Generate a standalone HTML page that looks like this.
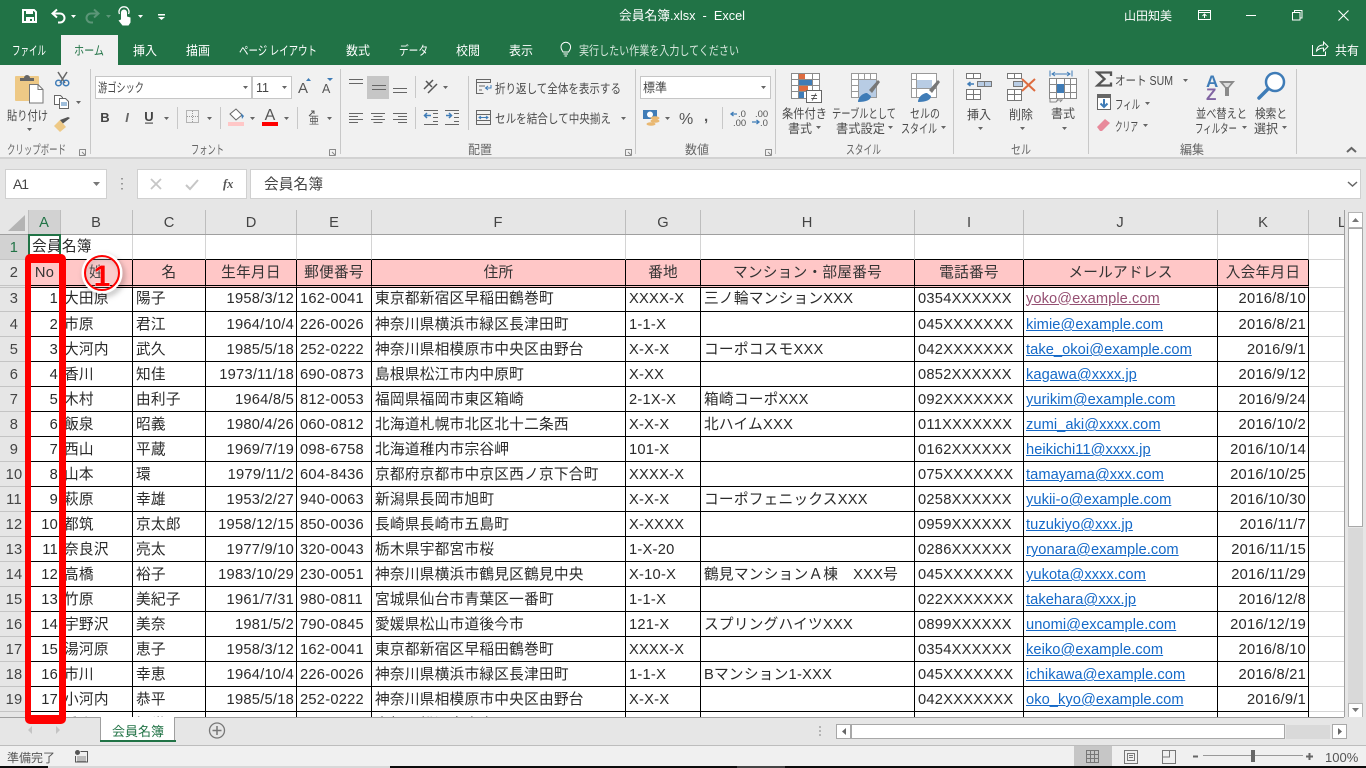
<!DOCTYPE html>
<html lang="ja"><head><meta charset="utf-8"><title>会員名簿.xlsx - Excel</title>
<style>
html,body{margin:0;padding:0;width:1366px;height:768px;overflow:hidden;background:#e6e6e6}
body{position:relative;font-family:"Liberation Sans","Noto Sans CJK JP",sans-serif}
svg{position:absolute;left:0;top:0;font-family:"Liberation Sans","Noto Sans CJK JP",sans-serif}
#g{position:absolute;left:0;top:235px;width:1344px;height:482px;overflow:hidden;background:#fff}
table{border-collapse:separate;border-spacing:0;table-layout:fixed;width:1384px;font-size:14.67px;letter-spacing:.25px;color:#2a2a2a;line-height:20px}
td,th{box-sizing:border-box;height:25px;padding:2px 0 0 3px;border-right:1px solid #d4d4d4;border-bottom:1px solid #d4d4d4;white-space:nowrap;overflow:hidden;font-weight:400;text-align:left}
th{background:#e6e6e6;text-align:center;padding:2px 0 0;border-right:1px solid #9f9f9f;border-bottom:1px solid #c4c4c4;color:#444}
tr.a td{border-bottom-color:#000}
tr.d td,tr.h td{border-color:#000}
tr.h{height:28px}tr.h td,tr.h th{height:28px;padding-top:0;padding-bottom:0}
tr.h td{background:#ffc7c7;text-align:center;padding-left:0;border-bottom:3px double #000;color:#333}
tr.h th{border-bottom:3px double #c4c4c4}
tr.f td,tr.f th{height:24px;padding-top:0;padding-bottom:2px}
tr.d td.l,tr.h td.l{border-color:#d4d4d4;background:#fff;border-bottom:1px solid #d4d4d4}
td.r{text-align:right;padding:2px 2px 0 0}
tr.f td.r{padding:0 2px 2px 0}
td a{color:#1469c8;text-decoration:underline;letter-spacing:.05px;margin-left:-1px}
td a.v{color:#954f72}
#a1{position:absolute;left:32px;top:237px;font-size:14.67px;letter-spacing:.25px;color:#2a2a2a;line-height:20px}
#sel{position:absolute;left:28px;top:234px;width:33px;height:27px;box-sizing:border-box;border:2px solid #217346}
#red{position:absolute;left:25px;top:254px;width:41px;height:470px;box-sizing:border-box;border:solid #f00;border-width:9px 7px 9px 6px;border-radius:5px 5px 5px 5px}
</style></head><body>
<svg width="1366" height="768" viewBox="0 0 1366 768">
<rect width="1366" height="65" fill="#217346"/>
<rect y="65" width="1366" height="93" fill="#f1f1f1"/>
<rect y="157" width="1366" height="2" fill="#d2d2d2"/>
<rect y="159" width="1366" height="51" fill="#e6e6e6"/>
<!-- title bar -->
<path d="M23 10h11l2 2v10H23z" fill="none" stroke="#fff" stroke-width="2"/><rect x="26" y="10" width="7" height="4" fill="#fff"/><path d="M26 23v-6h8v6h-2v-4h-2v4z" fill="#fff"/>
<path d="M53 13.5h7a4.5 4.5 0 0 1 0 9h-2" fill="none" stroke="#fff" stroke-width="2"/><path d="M57 9.5l-4.5 4 4.5 4" fill="none" stroke="#fff" stroke-width="2"/><path d="M71 15h5l-2.5 3z" fill="#fff"/>
<path d="M98 13.5h-7a4.5 4.5 0 0 0 0 9h2" fill="none" stroke="#5c9678" stroke-width="2"/><path d="M94 9.5l4.5 4-4.5 4" fill="none" stroke="#5c9678" stroke-width="2"/><path d="M106 15h5l-2.5 3z" fill="#5c9678"/>
<path d="M121 12.5a3 3 0 0 1 6 0v4l3.500 1v5l-2 3h-6l-4-5 2.500-1v-7z" fill="#fff"/><path d="M119.500 14a5 5 0 1 1 9 0" fill="none" stroke="#fff" stroke-width="1.300"/><path d="M138 15h5l-2.500 3z" fill="#fff"/>
<rect x="158" y="14" width="7" height="1.500" fill="#fff"/><path d="M158 17h7l-3.500 3z" fill="#fff"/>
<g fill="#fff" font-size="13"><text x="619" y="20" textLength="126" lengthAdjust="spacingAndGlyphs" xml:space="preserve">会員名簿.xlsx  -  Excel</text><text x="1124" y="20" font-size="12" textLength="48" lengthAdjust="spacingAndGlyphs">山田知美</text></g>
<rect x="1198.500" y="10.500" width="12" height="9" fill="none" stroke="#fff"/><path d="M1198 12.500h13M1204.500 18v-4M1202.500 16l2-2 2 2" fill="none" stroke="#fff"/>
<rect x="1246" y="15" width="10" height="1" fill="#fff"/>
<path d="M1292.500 12.500h7.500v7.500h-7.500zM1294.500 12.500v-2h7.500v7.500h-2" fill="none" stroke="#fff"/>
<path d="M1338.500 10.500l10 10M1348.500 10.500l-10 10" fill="none" stroke="#fff" stroke-width="1.100"/>
<!-- tabs -->
<rect x="61" y="35" width="57" height="30" fill="#f1f1f1"/>
<g fill="#fff" font-size="12.500">
<text x="12" y="55" textLength="34" lengthAdjust="spacingAndGlyphs">ファイル</text>
<text x="74" y="55" textLength="30" lengthAdjust="spacingAndGlyphs" fill="#217346">ホーム</text>
<text x="133" y="55" textLength="24" lengthAdjust="spacingAndGlyphs">挿入</text>
<text x="186" y="55" textLength="24" lengthAdjust="spacingAndGlyphs">描画</text>
<text x="239" y="55" textLength="78" lengthAdjust="spacingAndGlyphs" xml:space="preserve">ページ レイアウト</text>
<text x="346" y="55" textLength="24" lengthAdjust="spacingAndGlyphs">数式</text>
<text x="399" y="55" textLength="29" lengthAdjust="spacingAndGlyphs">データ</text>
<text x="456" y="55" textLength="24" lengthAdjust="spacingAndGlyphs">校閲</text>
<text x="509" y="55" textLength="24" lengthAdjust="spacingAndGlyphs">表示</text>
<text x="579" y="55" textLength="160" lengthAdjust="spacingAndGlyphs" fill="#d6e6dc">実行したい作業を入力してください</text>
<text x="1335" y="55" textLength="24" lengthAdjust="spacingAndGlyphs">共有</text>
</g>
<path d="M563 52c-1-2-2-2.500-2-5a4.800 4.800 0 0 1 9.600 0c0 2.500-1 3-2 5zM563.500 54h4.500M564.500 56h2.500" fill="none" stroke="#fff"/>
<path d="M1312.500 45v10.500h13v-4M1316.500 51c.5-4 3-6 7-6v-3l4.500 4.500-4.500 4.500v-3c-3 0-5 1-7 3z" fill="none" stroke="#fff"/>
<!-- separators -->
<g fill="#c8c8c8"><rect x="90" y="69" width="1" height="85"/><rect x="340" y="69" width="1" height="85"/><rect x="635" y="69" width="1" height="85"/><rect x="775" y="69" width="1" height="85"/><rect x="953" y="69" width="1" height="85"/><rect x="1088" y="69" width="1" height="85"/><rect x="1296" y="69" width="1" height="85"/>
<rect x="177" y="107" width="1" height="22"/><rect x="220" y="107" width="1" height="22"/><rect x="297" y="107" width="1" height="22"/><rect x="415" y="76" width="1" height="22"/><rect x="415" y="107" width="1" height="22"/><rect x="468" y="76" width="1" height="54"/><rect x="722" y="107" width="1" height="22"/></g>
<!-- clipboard -->
<rect x="15" y="76" width="24" height="25" rx="1" fill="#eec986"/><path d="M20 78h4a3 3 0 0 1 6 0h4v3H20z" fill="#666"/>
<path d="M29.500 84.500h8.500l5 5v13.500H29.500z" fill="#fff" stroke="#777"/><path d="M38 84.500v5h5" fill="none" stroke="#777"/>
<path d="M58 72l7 11M67 72l-7 11" stroke="#666" stroke-width="1.500" fill="none"/><circle cx="58.500" cy="83" r="2.800" fill="none" stroke="#3f7cb7" stroke-width="1.500"/><circle cx="66" cy="83" r="2.800" fill="none" stroke="#3f7cb7" stroke-width="1.500"/>
<path d="M54.500 95.500h6l2 2v7h-8z" fill="#fff" stroke="#666"/><path d="M59.500 98.500h6l3 3v7h-9z" fill="#fff" stroke="#666"/><path d="M61 103h6M61 105h6" stroke="#3f7cb7"/><path d="M76 101h5l-2.500 3z" fill="#666"/>
<path d="M54 126l6-6 6 7-6 5z" fill="#eec986"/><path d="M60 120l3 3.500 7-5.500-2-1z" fill="#555"/>
<g fill="#4a4a4a" font-size="12.500">
<text x="7" y="120" textLength="41" lengthAdjust="spacingAndGlyphs">貼り付け</text>
<text x="7" y="154" textLength="59" lengthAdjust="spacingAndGlyphs" fill="#666">クリップボード</text>
<text x="191" y="154" textLength="33" lengthAdjust="spacingAndGlyphs" fill="#666">フォント</text>
<text x="468" y="154" textLength="24" lengthAdjust="spacingAndGlyphs" fill="#666">配置</text>
<text x="685" y="154" textLength="24" lengthAdjust="spacingAndGlyphs" fill="#666">数値</text>
<text x="846" y="154" textLength="35" lengthAdjust="spacingAndGlyphs" fill="#666">スタイル</text>
<text x="1011" y="154" textLength="20" lengthAdjust="spacingAndGlyphs" fill="#666">セル</text>
<text x="1180" y="154" textLength="24" lengthAdjust="spacingAndGlyphs" fill="#666">編集</text>
<text x="495" y="93" textLength="126" lengthAdjust="spacingAndGlyphs">折り返して全体を表示する</text>
<text x="495" y="123" textLength="116" lengthAdjust="spacingAndGlyphs">セルを結合して中央揃え</text>
<text x="782" y="118" textLength="45" lengthAdjust="spacingAndGlyphs">条件付き</text>
<text x="788" y="133" textLength="24" lengthAdjust="spacingAndGlyphs">書式</text>
<text x="832" y="118" textLength="64" lengthAdjust="spacingAndGlyphs">テーブルとして</text>
<text x="836" y="133" textLength="49" lengthAdjust="spacingAndGlyphs">書式設定</text>
<text x="910" y="118" textLength="30" lengthAdjust="spacingAndGlyphs">セルの</text>
<text x="901" y="133" textLength="36" lengthAdjust="spacingAndGlyphs">スタイル</text>
<text x="967" y="119" textLength="24" lengthAdjust="spacingAndGlyphs">挿入</text>
<text x="1009" y="119" textLength="24" lengthAdjust="spacingAndGlyphs">削除</text>
<text x="1051" y="118" textLength="24" lengthAdjust="spacingAndGlyphs">書式</text>
<text x="1115" y="85" textLength="58" lengthAdjust="spacingAndGlyphs" xml:space="preserve">オート SUM</text>
<text x="1115" y="109" textLength="25" lengthAdjust="spacingAndGlyphs">フィル</text>
<text x="1115" y="131" textLength="23" lengthAdjust="spacingAndGlyphs">クリア</text>
<text x="1196" y="118" textLength="51" lengthAdjust="spacingAndGlyphs">並べ替えと</text>
<text x="1195" y="133" textLength="42" lengthAdjust="spacingAndGlyphs">フィルター</text>
<text x="1255" y="118" textLength="32" lengthAdjust="spacingAndGlyphs">検索と</text>
<text x="1254" y="133" textLength="24" lengthAdjust="spacingAndGlyphs">選択</text>
</g>
<!-- font group -->
<g fill="#fff" stroke="#c6c6c6"><rect x="95.500" y="76.500" width="156" height="22"/><rect x="252.500" y="76.500" width="39" height="22"/><rect x="640.500" y="76.500" width="130" height="22"/></g>
<g fill="#444"><text x="98" y="92" font-size="12.500" textLength="46" lengthAdjust="spacingAndGlyphs">游ゴシック</text><text x="256" y="92" font-size="12.500">11</text><text x="643" y="92" font-size="12.500" textLength="24" lengthAdjust="spacingAndGlyphs">標準</text>
<text x="298" y="93" font-size="15" fill="#555">A</text><text x="322" y="93" font-size="12.500" fill="#555">A</text>
<text x="105" y="122" font-size="13" font-weight="700" text-anchor="middle">B</text><text x="127" y="122" font-size="13" font-weight="700" font-style="italic" text-anchor="middle" fill="#666">I</text><text x="149" y="121" font-size="13" font-weight="700" text-anchor="middle">U</text>
<text x="270" y="120" font-size="16" font-weight="400" text-anchor="middle" fill="#555">A</text>
<text x="679" y="124" font-size="16" fill="#555">%</text><text x="704" y="121" font-size="15" font-weight="700" fill="#555">,</text>
<text x="309" y="124" font-size="10" fill="#555">亜</text></g>
<path d="M243 86h5l-2.500 3zM282 86h5l-2.500 3zM761 86h5l-2.500 3z" fill="#666"/>
<path d="M306 81l2.500-3 2.500 3zM327 78h6l-3 3z" fill="#3f7cb7"/>
<rect x="145" y="122.500" width="8" height="1.200" fill="#555"/>
<path d="M164 117h5l-2.500 3zM207 117h5l-2.500 3zM250 117h5l-2.500 3zM284 117h5l-2.500 3zM327 117h5l-2.500 3zM621 117h5l-2.500 3zM665 117h5l-2.500 3zM443 86h5l-2.500 3zM27 128h5l-2.500 3zM816 126h5l-2.500 3zM888 126h5l-2.500 3zM941 126h5l-2.500 3zM978 127h5l-2.500 3zM1020 127h5l-2.500 3zM1062 127h5l-2.500 3zM1183 79h5l-2.500 3zM1145 102h5l-2.500 3zM1143 124h5l-2.500 3zM1242 126h5l-2.500 3zM1282 126h5l-2.500 3z" fill="#666"/>
<rect x="186.500" y="110.500" width="12" height="12" fill="none" stroke="#777" stroke-dasharray="1 1"/><path d="M192.500 111v12M187 116.500h12" stroke="#999" stroke-dasharray="1 1"/>
<path d="M230 114l6-5 6 6-6 5z" fill="#fff" stroke="#666"/><path d="M241 113l3 3-2 3z" fill="#3f7cb7"/><rect x="228" y="122" width="16" height="4" fill="#ffc7c7"/>
<rect x="262" y="122" width="16" height="4" fill="#f00"/>
<path d="M309 116l5-5M311 111h3v3" fill="none" stroke="#555"/>
<!-- alignment -->
<rect x="367" y="76" width="22" height="23" fill="#c6c6c6"/>
<path d="M349 79.500h14M349 83.500h14M372 85.500h14M372 89.500h14M393 88.500h14M393 92.500h14M349 113.500h14M349 116.500h9M349 119.500h14M349 122.500h9M371 113.500h14M373.500 116.500h9M371 119.500h14M373.500 122.500h9M393 113.500h14M398 116.500h9M393 119.500h14M398 122.500h9" stroke="#666" fill="none"/>
<path d="M424 89l9-9M428 93l9-9M426 81l6 6" stroke="#555" fill="none" stroke-width="1.500"/>
<path d="M433 113.500h5M433 117.500h5M433 121.500h5M424 124.500h14M424 110.500h14" stroke="#666" fill="none"/><path d="M431 115.500h-6M427 113l-2.500 2.500 2.500 2.500" stroke="#3f7cb7" fill="none" stroke-width="1.500"/>
<path d="M454 113.500h5M454 117.500h5M454 121.500h5M445 124.500h14M445 110.500h14" stroke="#666" fill="none"/><path d="M446 115.500h6M449 113l2.500 2.500-2.500 2.500" stroke="#3f7cb7" fill="none" stroke-width="1.500"/>
<path d="M476.500 79.500h14v3h-14zM476.500 82.500v11h7M479 86h6M479 90h3" fill="none" stroke="#666"/><path d="M491 85v3h-5M488 86l-2.500 2 2.500 2" fill="none" stroke="#3f7cb7"/>
<path d="M476.500 110.500h14v14h-14zM476.500 114.500h14M476.500 120.500h14" fill="none" stroke="#666"/><path d="M479 117.500h9M481 116l-2 1.500 2 1.500M486 116l2 1.500-2 1.500" fill="none" stroke="#3f7cb7"/>
<!-- launchers -->
<path d="M79.500 149.500h6v6M79.500 149.500v6h6M82 152l3 3" fill="none" stroke="#8a8a8a"/>
<path d="M329.500 149.500h6v6M329.500 149.500v6h6M332 152l3 3" fill="none" stroke="#8a8a8a"/>
<path d="M625.500 149.500h6v6M625.500 149.500v6h6M628 152l3 3" fill="none" stroke="#8a8a8a"/>
<path d="M765.500 149.500h6v6M765.500 149.500v6h6M768 152l3 3" fill="none" stroke="#8a8a8a"/>
<!-- number -->
<rect x="643" y="110" width="14" height="9" fill="#3f7cb7"/><circle cx="650" cy="114.500" r="3" fill="#fff"/>
<g fill="#e9b872"><ellipse cx="655" cy="118" rx="4.500" ry="1.800"/><ellipse cx="655" cy="121" rx="4.500" ry="1.800"/><ellipse cx="651" cy="124" rx="4.500" ry="1.800"/></g>
<g fill="#555" font-size="9.500"><text x="738" y="117">.0</text><text x="733" y="126">.00</text><text x="755" y="117">.00</text><text x="760" y="126">.0</text></g>
<path d="M737 114h-6M733.500 112l-2.500 2 2.500 2" fill="none" stroke="#3f7cb7" stroke-width="1.300"/><path d="M752 122h7M756.500 120l2.500 2-2.500 2" fill="none" stroke="#3f7cb7" stroke-width="1.300"/>
<!-- cond format -->
<path d="M791.500 73.500h28v25h-28zM798.500 73.500v25M812.500 73.500v25M791.500 79.500h28M791.500 85.500h28M791.500 91.500h28" fill="#fff" stroke="#8a8a8a"/>
<rect x="799" y="74" width="6" height="5" fill="#de6b3f"/><rect x="799" y="80" width="13" height="5" fill="#3f7cb7"/><rect x="799" y="86" width="9" height="5" fill="#de6b3f"/><rect x="799" y="92" width="5" height="6" fill="#3f7cb7"/>
<rect x="806.500" y="90.500" width="15" height="12" fill="#fff" stroke="#666"/><text x="814" y="101" font-size="12" text-anchor="middle" fill="#444">≠</text>
<!-- table fmt -->
<path d="M851.500 73.500h25v24h-25zM851.500 79.500h25M851.500 85.500h25M851.500 91.500h25M858.500 73.500v24M864.500 73.500v24M870.500 73.500v24" fill="#fff" stroke="#999"/>
<rect x="859" y="80" width="17" height="17" fill="#b8cce4"/><path d="M880 82l-2-2-9 10 3 3z" fill="#777"/><path d="M858 102c0-5 5-9 9-9l4 3c0 4-5 6-13 6z" fill="#3f7cb7"/>
<!-- cell style -->
<path d="M911.500 73.500h25v24h-25z" fill="#fff" stroke="#999"/><path d="M911.500 79.500h5M916.500 73.500v24M911.500 88.500h25" fill="none" stroke="#999"/>
<rect x="917" y="80" width="15" height="8" fill="#b8cce4"/><path d="M940 82l-2-2-9 10 3 3z" fill="#777"/><path d="M918 102c0-5 5-9 9-9l4 3c0 4-5 6-13 6z" fill="#3f7cb7"/>
<!-- insert -->
<path d="M966.500 73.500h14v5h-14zM973.500 73.500v5M966.500 89.500h14v10h-14zM966.500 94.500h14M973.500 89.500v10" fill="#fff" stroke="#777"/>
<path d="M977.500 81.500h14v5h-14zM984.500 81.500v5" fill="#b8cce4" stroke="#777"/><path d="M974 84h-6M970.500 82l-2.500 2 2.500 2" fill="none" stroke="#3f7cb7" stroke-width="1.500"/>
<!-- delete -->
<path d="M1007.500 73.500h14v5h-14zM1014.500 73.500v5M1007.500 89.500h14v11h-14zM1007.500 94.500h14M1014.500 89.500v11" fill="#fff" stroke="#777"/>
<rect x="1013.500" y="81.500" width="9" height="5" fill="#b8cce4" stroke="#777"/><path d="M1022 79l13 12M1035 79l-13 12" stroke="#de6b3f" stroke-width="2" fill="none"/>
<!-- format -->
<path d="M1050 70.500v6M1072 70.500v6M1052 74h18M1055 72l-3 2 3 2M1067 72l3 2-3 2" fill="none" stroke="#3f7cb7"/>
<path d="M1049.500 78.500h27v20h-27zM1049.500 84.500h27M1049.500 92.500h27M1056.500 78.500v20M1064.500 78.500v20M1070.500 78.500v20" fill="#fff" stroke="#888"/><rect x="1057" y="84" width="7" height="9" fill="#3f7cb7"/>
<path d="M1050 99v3h6l2-2h4l-2 2M1056 102l2-3" fill="none" stroke="#888"/>
<!-- edit -->
<path d="M1111 76v-3.500h-13.500l7 6.500-7 6.500h13.500v-3" fill="none" stroke="#555" stroke-width="2.300"/>
<rect x="1097.500" y="94.500" width="13" height="15" fill="#fff" stroke="#666"/><rect x="1097" y="94" width="14" height="4" fill="#666"/><path d="M1104 99v8M1100.500 103.500l3.500 3.500 3.500-3.500" fill="none" stroke="#3f7cb7" stroke-width="2"/>
<path d="M1097 127l8-8 5 4-8 8h-2z" fill="#e88a9b"/>
<g font-weight="700" font-size="17"><text x="1206" y="87" fill="#3f7cb7">A</text><text x="1206" y="100" fill="#8064a2">Z</text></g>
<path d="M1219 81h16l-6 7v8h-4v-8z" fill="#8a8a8a"/><path d="M1223 83h8l-3 4h-2z" fill="#ddd"/>
<circle cx="1275" cy="82" r="9" fill="#fff" stroke="#3f7cb7" stroke-width="2.500"/><path d="M1268 89l-9 9" stroke="#3f7cb7" stroke-width="3.500" stroke-linecap="round"/>
<path d="M1347 152l4.500-4 4.500 4" fill="none" stroke="#666" stroke-width="2"/>
<!-- formula bar -->
<g fill="#fff" stroke="#d0d0d0"><rect x="5.500" y="169.500" width="101" height="29"/><rect x="137.500" y="169.500" width="109" height="29"/><rect x="250.500" y="169.500" width="1110" height="29"/></g>
<text x="13" y="189" font-size="14" fill="#444" textLength="16" lengthAdjust="spacing">A1</text><path d="M93 182h7l-3.500 4z" fill="#777"/>
<path d="M122 178v1.500M122 183v1.500M122 188v1.500" stroke="#999" stroke-width="2"/>
<path d="M151 179l10 10M161 179l-10 10" stroke="#c6c6c6" stroke-width="1.800" fill="none"/><path d="M186 185l4 4 8-9" stroke="#c6c6c6" stroke-width="2" fill="none"/>
<text x="223" y="188" font-family="Liberation Serif,serif" font-style="italic" font-weight="700" font-size="12.500" fill="#555">fx</text>
<text x="264" y="189" font-size="14.670" textLength="59" fill="#444">会員名簿</text>
<path d="M1348 182l4.500 4 4.500-4" fill="none" stroke="#666" stroke-width="1.500"/>
<!-- col headers -->
<rect y="210" width="1344" height="25" fill="#e6e6e6"/><rect x="28" y="210" width="32" height="24" fill="#d2d2d2"/>
<path d="M8 231h17v-16z" fill="#b4b4b4"/>
<path d="M28.500 210v24M60.500 210v24M132.500 210v24M205.500 210v24M296.500 210v24M371.500 210v24M625.500 210v24M700.500 210v24M914.500 210v24M1023.500 210v24M1217.500 210v24M1308.500 210v24" stroke="#bdbdbd" fill="none"/>
<rect y="234" width="1344" height="1" fill="#9f9f9f"/>
<g font-size="14.670" fill="#444" text-anchor="middle"><text x="44" y="227" fill="#217346">A</text><text x="96" y="227">B</text><text x="169" y="227">C</text><text x="251" y="227">D</text><text x="334" y="227">E</text><text x="498" y="227">F</text><text x="663" y="227">G</text><text x="807" y="227">H</text><text x="969" y="227">I</text><text x="1120" y="227">J</text><text x="1263" y="227">K</text><text x="1342" y="227">L</text></g>
<rect x="1344" y="210" width="22" height="507" fill="#e6e6e6"/>
<rect x="1344" y="210" width="1" height="507" fill="#9f9f9f"/>
<rect x="1348.500" y="212.500" width="14" height="15" fill="#fff" stroke="#b4b4b4"/><path d="M1352 222l3.500-4 3.500 4z" fill="#777"/>
<rect x="1348.500" y="228.500" width="14" height="298" fill="#fff" stroke="#a8a8a8"/>
<rect x="1348" y="528" width="15" height="175" fill="#d9d9d9"/>
<rect x="1348.500" y="703.500" width="14" height="14" fill="#fff" stroke="#b4b4b4"/><path d="M1352 708l3.500 4 3.500-4z" fill="#777"/>
<!-- tabs row -->
<rect y="717" width="1366" height="28" fill="#e6e6e6"/><rect y="717" width="1344" height="1" fill="#9f9f9f"/>
<path d="M100.500 717v24h74v-24" fill="#fff" stroke="#9f9f9f"/><rect x="100" y="740" width="76" height="2" fill="#217346"/>
<text x="112" y="736" font-size="13" fill="#217346" textLength="52" lengthAdjust="spacingAndGlyphs">会員名簿</text>
<path d="M32 726l-4 4 4 4zM56 726l4 4-4 4z" fill="#c4c4c4"/>
<circle cx="217" cy="730.500" r="7.500" fill="none" stroke="#777" stroke-width="1.300"/><path d="M212.500 730.500h9M217 726v9" stroke="#777" stroke-width="1.500"/>
<path d="M820 726v2M820 730v2M820 734v2" stroke="#b4b4b4" stroke-width="2"/>
<rect x="836.500" y="724.500" width="14" height="14" fill="#fff" stroke="#a8a8a8"/><path d="M846 728l-4 3.500 4 3.500z" fill="#666"/>
<rect x="851.500" y="724.500" width="433" height="14" fill="#fff" stroke="#a8a8a8"/><rect x="1286" y="725" width="44" height="14" fill="#d9d9d9"/>
<rect x="1332.500" y="724.500" width="14" height="14" fill="#fff" stroke="#a8a8a8"/><path d="M1338 728l4 3.500-4 3.500z" fill="#666"/>
<!-- status bar -->
<rect y="745" width="1366" height="21" fill="#f0f0f0"/><rect y="745" width="1366" height="1" fill="#bdbdbd"/>
<text x="7" y="762" font-size="12" fill="#555" textLength="48" lengthAdjust="spacingAndGlyphs">準備完了</text>
<rect x="75" y="750" width="5" height="5" rx="2.500" fill="#555"/><path d="M80.500 751.500h7v10.500h-12v-6" fill="none" stroke="#555"/><path d="M77 757h9M77 759h9M77 761h9" stroke="#888"/>
<rect x="1074" y="746" width="38" height="20" fill="#c6c6c6"/>
<path d="M1086.500 750.500h12v12h-12zM1086.500 754.500h12M1086.500 758.500h12M1090.500 750.500v12M1094.500 750.500v12" fill="none" stroke="#777"/>
<path d="M1124.500 750.500h13v13h-13zM1127.500 753.500h7v7h-7zM1129 755.500h4M1129 757.500h4" fill="none" stroke="#777"/>
<path d="M1162.500 750.500h13v13h-13zM1169.500 750.500v6.500h-7" fill="none" stroke="#777"/>
<path d="M1193 756.500h5" stroke="#666" stroke-width="2"/><rect x="1203" y="755" width="100" height="1" fill="#999"/><rect x="1251" y="750" width="4" height="12" fill="#666"/><path d="M1306 756.500h7M1309.500 753v7" stroke="#666" stroke-width="2"/>
<text x="1325" y="762" font-size="13" fill="#555">100%</text>
<rect y="766" width="1366" height="2" fill="#0c0c0c"/><rect x="48" y="766" width="342" height="2" fill="#d8d8d8"/><rect x="737" y="766" width="48" height="2" fill="#444"/>
</svg>
<div id="g"><table>
<colgroup><col style="width:29px"><col style="width:32px"><col style="width:72px"><col style="width:73px"><col style="width:91px"><col style="width:75px"><col style="width:254px"><col style="width:75px"><col style="width:214px"><col style="width:109px"><col style="width:194px"><col style="width:91px"><col style="width:75px"></colgroup>
<tr class="a"><th style="background:#d2d2d2;color:#217346">1</th><td></td><td></td><td></td><td></td><td></td><td></td><td></td><td></td><td></td><td></td><td></td><td style="border-bottom-color:#d4d4d4"></td></tr>
<tr class="h"><th>2</th><td>No</td><td>姓</td><td>名</td><td>生年月日</td><td>郵便番号</td><td>住所</td><td>番地</td><td>マンション・部屋番号</td><td>電話番号</td><td>メールアドレス</td><td>入会年月日</td><td class="l"></td></tr>
<tr class="d f"><th>3</th><td class="r">1</td><td>大田原</td><td>陽子</td><td class="r">1958/3/12</td><td>162-0041</td><td>東京都新宿区早稲田鶴巻町</td><td>XXXX-X</td><td>三ノ輪マンションXXX</td><td>0354XXXXXX</td><td><a class="v">yoko@example.com</a></td><td class="r">2016/8/10</td><td class="l"></td></tr>
<tr class="d"><th>4</th><td class="r">2</td><td>市原</td><td>君江</td><td class="r">1964/10/4</td><td>226-0026</td><td>神奈川県横浜市緑区長津田町</td><td>1-1-X</td><td></td><td>045XXXXXXX</td><td><a>kimie@example.com</a></td><td class="r">2016/8/21</td><td class="l"></td></tr>
<tr class="d"><th>5</th><td class="r">3</td><td>大河内</td><td>武久</td><td class="r">1985/5/18</td><td>252-0222</td><td>神奈川県相模原市中央区由野台</td><td>X-X-X</td><td>コーポコスモXXX</td><td>042XXXXXXX</td><td><a>take_okoi@example.com</a></td><td class="r">2016/9/1</td><td class="l"></td></tr>
<tr class="d"><th>6</th><td class="r">4</td><td>香川</td><td>知佳</td><td class="r">1973/11/18</td><td>690-0873</td><td>島根県松江市内中原町</td><td>X-XX</td><td></td><td>0852XXXXXX</td><td><a>kagawa@xxxx.jp</a></td><td class="r">2016/9/12</td><td class="l"></td></tr>
<tr class="d"><th>7</th><td class="r">5</td><td>木村</td><td>由利子</td><td class="r">1964/8/5</td><td>812-0053</td><td>福岡県福岡市東区箱崎</td><td>2-1X-X</td><td>箱崎コーポXXX</td><td>092XXXXXXX</td><td><a>yurikim@example.com</a></td><td class="r">2016/9/24</td><td class="l"></td></tr>
<tr class="d"><th>8</th><td class="r">6</td><td>飯泉</td><td>昭義</td><td class="r">1980/4/26</td><td>060-0812</td><td>北海道札幌市北区北十二条西</td><td>X-X-X</td><td>北ハイムXXX</td><td>011XXXXXXX</td><td><a>zumi_aki@xxxx.com</a></td><td class="r">2016/10/2</td><td class="l"></td></tr>
<tr class="d"><th>9</th><td class="r">7</td><td>西山</td><td>平蔵</td><td class="r">1969/7/19</td><td>098-6758</td><td>北海道稚内市宗谷岬</td><td>101-X</td><td></td><td>0162XXXXXX</td><td><a>heikichi11@xxxx.jp</a></td><td class="r">2016/10/14</td><td class="l"></td></tr>
<tr class="d"><th>10</th><td class="r">8</td><td>山本</td><td>環</td><td class="r">1979/11/2</td><td>604-8436</td><td>京都府京都市中京区西ノ京下合町</td><td>XXXX-X</td><td></td><td>075XXXXXXX</td><td><a>tamayama@xxx.com</a></td><td class="r">2016/10/25</td><td class="l"></td></tr>
<tr class="d"><th>11</th><td class="r">9</td><td>萩原</td><td>幸雄</td><td class="r">1953/2/27</td><td>940-0063</td><td>新潟県長岡市旭町</td><td>X-X-X</td><td>コーポフェニックスXXX</td><td>0258XXXXXX</td><td><a>yukii-o@example.com</a></td><td class="r">2016/10/30</td><td class="l"></td></tr>
<tr class="d"><th>12</th><td class="r">10</td><td>都筑</td><td>京太郎</td><td class="r">1958/12/15</td><td>850-0036</td><td>長崎県長崎市五島町</td><td>X-XXXX</td><td></td><td>0959XXXXXX</td><td><a>tuzukiyo@xxx.jp</a></td><td class="r">2016/11/7</td><td class="l"></td></tr>
<tr class="d"><th>13</th><td class="r">11</td><td>奈良沢</td><td>亮太</td><td class="r">1977/9/10</td><td>320-0043</td><td>栃木県宇都宮市桜</td><td>1-X-20</td><td></td><td>0286XXXXXX</td><td><a>ryonara@example.com</a></td><td class="r">2016/11/15</td><td class="l"></td></tr>
<tr class="d"><th>14</th><td class="r">12</td><td>高橋</td><td>裕子</td><td class="r">1983/10/29</td><td>230-0051</td><td>神奈川県横浜市鶴見区鶴見中央</td><td>X-10-X</td><td>鶴見マンションＡ棟　XXX号</td><td>045XXXXXXX</td><td><a>yukota@xxxx.com</a></td><td class="r">2016/11/29</td><td class="l"></td></tr>
<tr class="d"><th>15</th><td class="r">13</td><td>竹原</td><td>美紀子</td><td class="r">1961/7/31</td><td>980-0811</td><td>宮城県仙台市青葉区一番町</td><td>1-1-X</td><td></td><td>022XXXXXXX</td><td><a>takehara@xxx.jp</a></td><td class="r">2016/12/8</td><td class="l"></td></tr>
<tr class="d"><th>16</th><td class="r">14</td><td>宇野沢</td><td>美奈</td><td class="r">1981/5/2</td><td>790-0845</td><td>愛媛県松山市道後今市</td><td>121-X</td><td>スプリングハイツXXX</td><td>0899XXXXXX</td><td><a>unomi@excample.com</a></td><td class="r">2016/12/19</td><td class="l"></td></tr>
<tr class="d"><th>17</th><td class="r">15</td><td>湯河原</td><td>恵子</td><td class="r">1958/3/12</td><td>162-0041</td><td>東京都新宿区早稲田鶴巻町</td><td>XXXX-X</td><td></td><td>0354XXXXXX</td><td><a>keiko@example.com</a></td><td class="r">2016/8/10</td><td class="l"></td></tr>
<tr class="d"><th>18</th><td class="r">16</td><td>市川</td><td>幸恵</td><td class="r">1964/10/4</td><td>226-0026</td><td>神奈川県横浜市緑区長津田町</td><td>1-1-X</td><td>Bマンション1-XXX</td><td>045XXXXXXX</td><td><a>ichikawa@example.com</a></td><td class="r">2016/8/21</td><td class="l"></td></tr>
<tr class="d"><th>19</th><td class="r">17</td><td>小河内</td><td>恭平</td><td class="r">1985/5/18</td><td>252-0222</td><td>神奈川県相模原市中央区由野台</td><td>X-X-X</td><td></td><td>042XXXXXXX</td><td><a>oko_kyo@example.com</a></td><td class="r">2016/9/1</td><td class="l"></td></tr>
<tr class="d"><th>20</th><td class="r">18</td><td>香山</td><td>知世</td><td class="r">1973/11/18</td><td>690-0873</td><td>島根県松江市内中原町</td><td>X-XX</td><td></td><td>0852XXXXXX</td><td><a>kayama@xxxx.jp</a></td><td class="r">2016/9/12</td><td class="l"></td></tr>
</table></div>
<div id="a1">会員名簿</div>
<div id="sel"></div>
<div id="red"></div>
<svg width="1366" height="768" viewBox="0 0 1366 768" style="pointer-events:none">
<defs><filter id="s" x="-30%" y="-30%" width="170%" height="170%"><feDropShadow dx="2" dy="3" stdDeviation="3" flood-color="#000" flood-opacity=".3"/></filter></defs>
<circle cx="102" cy="273" r="18.500" fill="rgba(255,255,255,.1)" stroke="#fff" stroke-width="4" filter="url(#s)"/>
<circle cx="102" cy="273" r="17" fill="none" stroke="#f00" stroke-width="2"/>
<text x="102" y="286" font-size="30" font-weight="700" fill="#f00" text-anchor="middle" stroke="#fff" stroke-width=".6" paint-order="stroke">1</text>
</svg>
</body></html>
